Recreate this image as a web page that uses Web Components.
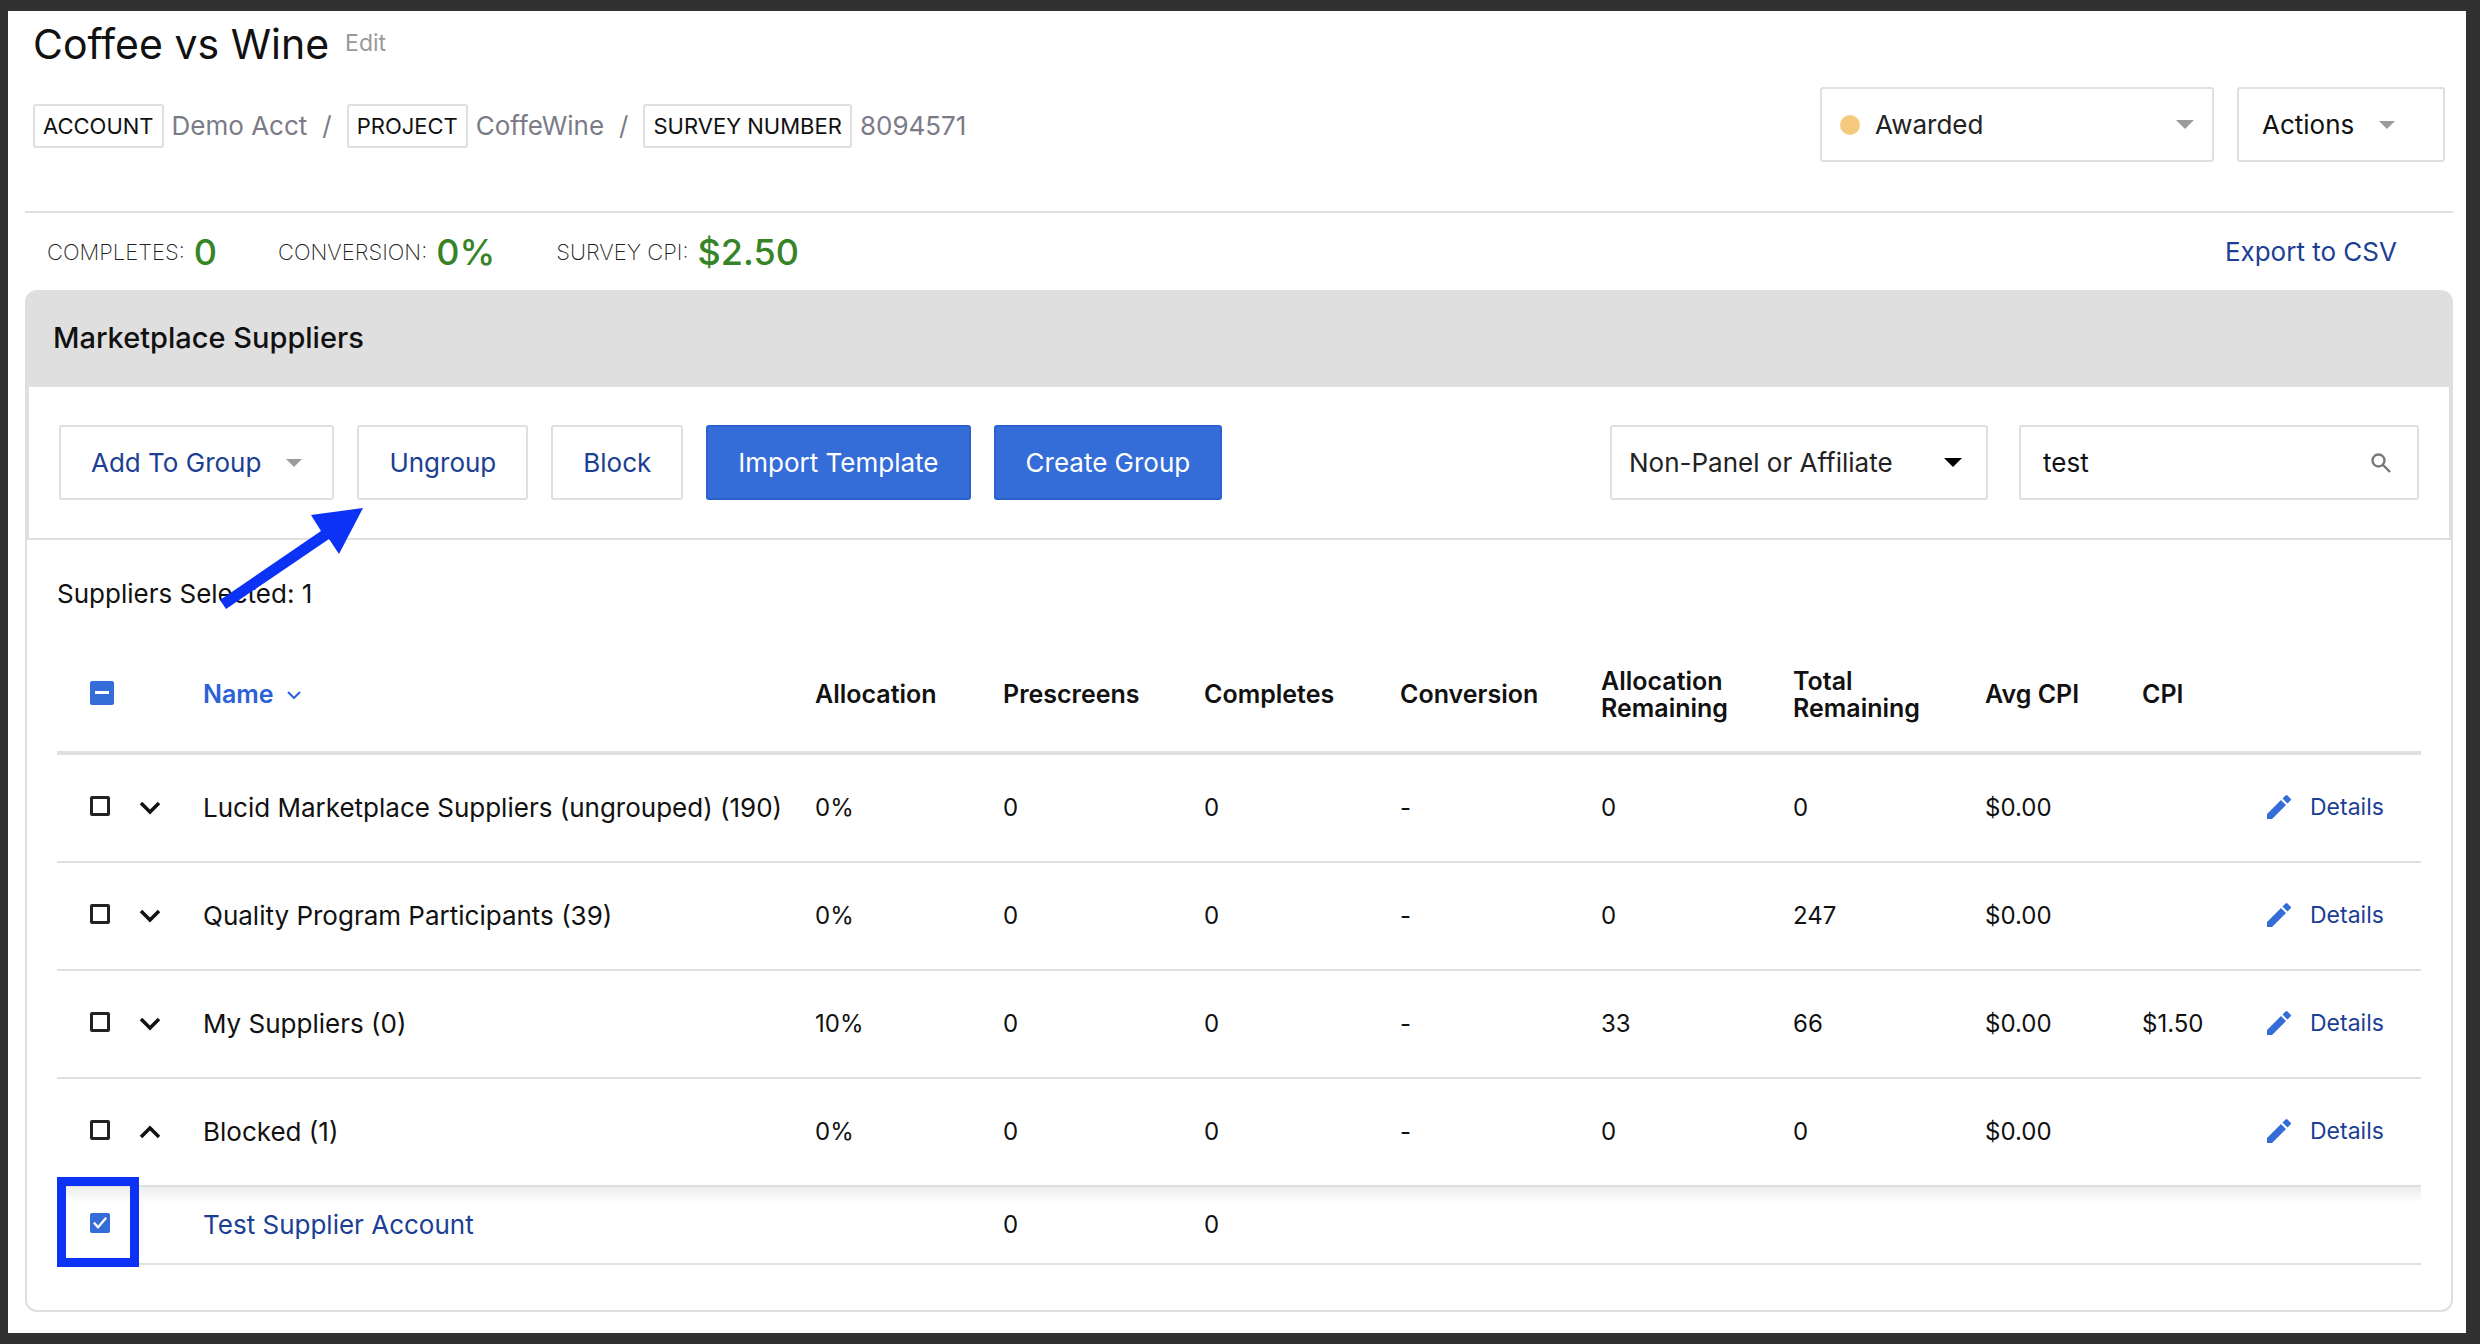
<!DOCTYPE html>
<html lang="en">
<head>
<meta charset="utf-8">
<title>Coffee vs Wine</title>
<style>
  * {
    box-sizing: border-box;
  }

  body {
    --line: #dfdfdf;
    --blue: #356dd8;
    --navy: #1b3f94;
    --grey: #9b9b9b;
    min-height: 100vh;
    margin: 0;
    padding: 11px 14px 11px 8px;
    background: #313131;
    color: #111111;
    font-family: Inter, "Liberation Sans", sans-serif;
    font-size: 26px;
    line-height: 32px;
  }

  main {
    padding: 0 13px 21px 17px;
    background: #ffffff;
  }
</style>
</head>
<body>
<main>
  <survey-header heading="Coffee vs Wine">
    <crumb-item slot="crumbs" label="ACCOUNT">Demo Acct</crumb-item>
    <crumb-item slot="crumbs" label="PROJECT">CoffeWine</crumb-item>
    <crumb-item slot="crumbs" label="SURVEY NUMBER">8094571</crumb-item>
    <my-select slot="actions" class="status" label="Survey status" option="Awarded" dot></my-select>
    <my-button slot="actions" class="actions" caret dark>Actions</my-button>
  </survey-header>

  <stats-bar>
    <stat-item label="COMPLETES:">0</stat-item>
    <stat-item label="CONVERSION:">0%</stat-item>
    <stat-item label="SURVEY CPI:">$2.50</stat-item>
  </stats-bar>

  <suppliers-panel heading="Marketplace Suppliers">
    <my-button slot="buttons" caret>Add To Group</my-button>
    <my-button slot="buttons">Ungroup</my-button>
    <my-button slot="buttons">Block</my-button>
    <my-button slot="buttons" primary>Import Template</my-button>
    <my-button slot="buttons" primary>Create Group</my-button>
    <my-select slot="filters" class="filter" label="Supplier type" option="Non-Panel or Affiliate"></my-select>
    <search-box slot="filters" value="test"></search-box>
    <supplier-table></supplier-table>
  </suppliers-panel>
</main>

<script>
(function () {
  function define(name, html, setup) {
    const template = document.createElement('template');
    template.innerHTML = html;

    window.customElements.define(name, class extends HTMLElement {
      constructor() {
        super();
        this._shadowRoot = this.attachShadow({ mode: 'open' });
        this._shadowRoot.appendChild(template.content.cloneNode(true));
      }
      connectedCallback() {
        if (setup) setup(this, this._shadowRoot);
      }
    });
  }

  define('survey-header', `
  <style>
    :host {
      display: flex;
      justify-content: space-between;
      align-items: flex-end;
      padding: 5px 8px 49px;
      border-bottom: 2px solid var(--line);
    }

    .title {
      display: flex;
      align-items: center;
      gap: 16px;
      margin-bottom: 32px;
    }

    h1 {
      margin: 0;
      font-size: 41px;
      font-weight: 400;
      line-height: 56px;
    }

    a {
      padding-bottom: 2px;
      color: #999999;
      font-size: 23px;
      text-decoration: none;
    }

    .crumbs, .controls {
      display: flex;
    }

    .crumbs {
      margin-bottom: 14px;
    }

    .controls {
      gap: 23px;
    }

    ::slotted(.status) {
      width: 394px;
    }

    ::slotted(.actions) {
      width: 208px;
    }
  </style>

  <div>
    <div class="title"><h1></h1><a href="#edit">Edit</a></div>
    <nav class="crumbs" aria-label="Survey"><slot name="crumbs"></slot></nav>
  </div>
  <div class="controls"><slot name="actions"></slot></div>
  `, (host, root) => {
    root.querySelector('h1').textContent = host.getAttribute('heading');
  });

  define('crumb-item', `
  <style>
    :host {
      display: flex;
      align-items: center;
      color: #7b7b87;
    }

    .tag {
      margin-right: 8px;
      padding: 4px 8px;
      border: 2px solid var(--line);
      border-radius: 3px;
      color: #111111;
      font-size: 22px;
    }

    .slash {
      margin: 0 15px;
    }

    :host(:last-of-type) .slash {
      display: none;
    }
  </style>

  <span class="tag"></span>
  <slot></slot>
  <span class="slash">/</span>
  `, (host, root) => {
    root.querySelector('.tag').textContent = host.getAttribute('label');
  });

  define('my-button', `
  <style>
    :host {
      display: block;
    }

    button {
      display: flex;
      align-items: center;
      gap: 25px;
      width: 100%;
      height: 75px;
      padding: 0 30px;
      background: #ffffff;
      border: 2px solid var(--line);
      border-radius: 3px;
      color: var(--navy);
      font: inherit;
      white-space: nowrap;
      cursor: pointer;
    }

    :host([dark]) button {
      padding: 0 23px;
      color: #111111;
    }

    :host([primary]) button {
      background: var(--blue);
      border-color: #2c60cf;
      color: #ffffff;
    }

    svg {
      display: none;
      fill: var(--grey);
    }

    :host([caret]) svg {
      display: block;
    }
  </style>

  <button type="button">
    <slot></slot>
    <svg width="16" height="8" viewBox="0 0 16 8"><path d="M0 0h16L8 8z"/></svg>
  </button>
  `);

  define('my-select', `
  <style>
    :host {
      display: grid;
      align-items: center;
    }

    select, .dot, svg {
      grid-area: 1 / 1;
    }

    select {
      width: 100%;
      height: 75px;
      margin: 0;
      padding: 0 60px 0 17px;
      appearance: none;
      background: #ffffff;
      border: 2px solid var(--line);
      border-radius: 3px;
      color: #222222;
      font: inherit;
    }

    .dot {
      display: none;
      width: 20px;
      height: 20px;
      margin-left: 20px;
      border-radius: 50%;
      background: #f5ca7f;
    }

    svg {
      justify-self: end;
      margin-right: 26px;
      pointer-events: none;
    }

    :host([dot]) .dot {
      display: block;
    }

    :host([dot]) select {
      padding-left: 53px;
    }

    :host([dot]) svg {
      margin-right: 20px;
      fill: var(--grey);
    }
  </style>

  <select></select>
  <span class="dot"></span>
  <svg width="18" height="9" viewBox="0 0 18 9"><path d="M0 0h18L9 9z"/></svg>
  `, (host, root) => {
    const $select = root.querySelector('select');
    $select.setAttribute('aria-label', host.getAttribute('label'));
    $select.innerHTML = '<option></option>';
    $select.firstChild.textContent = host.getAttribute('option');
  });

  define('search-box', `
  <style>
    :host {
      display: grid;
      align-items: center;
      width: 400px;
    }

    input, svg {
      grid-area: 1 / 1;
    }

    input {
      box-sizing: border-box;
      width: 100%;
      height: 75px;
      padding: 0 60px 0 22px;
      border: 2px solid var(--line);
      border-radius: 3px;
      color: #111111;
      font: inherit;
    }

    svg {
      justify-self: end;
      margin-right: 28px;
      fill: none;
      stroke: #777777;
      stroke-width: 2.4;
    }
  </style>

  <input type="text" aria-label="Search suppliers">
  <svg width="20" height="20" viewBox="0 0 20 20"><circle cx="7.5" cy="7.5" r="6"/><path d="M12 12l7 7"/></svg>
  `, (host, root) => {
    root.querySelector('input').value = host.getAttribute('value');
  });

  define('stats-bar', `
  <style>
    :host {
      display: flex;
      align-items: center;
      gap: 61px;
      height: 77px;
      padding: 0 56px 0 22px;
    }

    a {
      margin-left: auto;
      color: var(--navy);
      text-decoration: none;
    }
  </style>

  <slot></slot>
  <a href="#export">Export to CSV</a>
  `);

  define('stat-item', `
  <style>
    :host {
      display: flex;
      align-items: center;
      gap: 9px;
      color: #378428;
      font-size: 36px;
      font-weight: 500;
    }

    .label {
      color: #222222;
      font-size: 22px;
      font-weight: 200;
    }
  </style>

  <span class="label"></span>
  <slot></slot>
  `, (host, root) => {
    root.querySelector('.label').textContent = host.getAttribute('label');
  });

  define('suppliers-panel', `
  <style>
    :host {
      display: block;
      position: relative;
      border: 2px solid var(--line);
      border-radius: 12px;
    }

    h2 {
      margin: 0;
      padding: 30px 26px 33px;
      background: var(--line);
      border-radius: 9px 9px 0 0;
      font-size: 29px;
      font-weight: 500;
    }

    .toolbar {
      display: flex;
      justify-content: space-between;
      padding: 38px 30px;
      border: 2px solid var(--line);
      border-top: 0;
    }

    .buttons {
      display: flex;
      gap: 23px;
    }

    .filters {
      display: flex;
      gap: 31px;
    }

    ::slotted(.filter) {
      width: 378px;
    }

    .body {
      padding: 38px 30px 45px;
    }

    /* callout drawn over the panel */
    .arrow {
      position: absolute;
      top: 214px;
      left: 190px;
      fill: #0b32f5;
      pointer-events: none;
    }
  </style>

  <h2></h2>
  <div class="toolbar">
    <div class="buttons"><slot name="buttons"></slot></div>
    <div class="filters"><slot name="filters"></slot></div>
  </div>
  <div class="body"><slot></slot></div>
  <svg class="arrow" width="150" height="106" viewBox="0 0 150 106">
    <path d="M146 2L94 9l10 16L3 94l6 9 103-70 10 15z"/>
  </svg>
  `, (host, root) => {
    root.querySelector('h2').textContent = host.getAttribute('heading');
  });

  const suppliers = [
    { name: 'Lucid Marketplace Suppliers (ungrouped) (190)', cells: ['0%', '0', '0', '-', '0', '0', '$0.00', ''] },
    { name: 'Quality Program Participants (39)', cells: ['0%', '0', '0', '-', '0', '247', '$0.00', ''] },
    { name: 'My Suppliers (0)', cells: ['10%', '0', '0', '-', '33', '66', '$0.00', '$1.50'] },
    { name: 'Blocked (1)', open: true, cells: ['0%', '0', '0', '-', '0', '0', '$0.00', ''] },
    { name: 'Test Supplier Account', child: true, cells: ['', '0', '0', '', '', '', '', ''] }
  ];

  const pencil = '<svg class="pencil" width="24" height="24" viewBox="0 0 24 24"><path d="M0 24v-5L14 5l5 5L5 24zM15.5 3.5l3-3q1-1 2 0l3 3q1 1 0 2l-3 3z"/></svg>';

  function row(item) {
    const points = item.open ? 'M2 12l9-9 9 9' : 'M2 2l9 9 9-9';
    const toggle = `<button type="button" class="toggle" aria-label="Toggle ${item.name}" aria-expanded="${!!item.open}">
      <svg width="22" height="14" viewBox="0 0 22 14"><path d="${points}"/></svg></button>`;

    return `
    <tr class="${item.child ? 'child' : ''}">
      <td><div class="pick">
        <input type="checkbox" aria-label="Select ${item.name}" ${item.child ? 'checked' : ''}>
        ${item.child ? '<span class="highlight"></span>' : toggle}
      </div></td>
      <td class="name">${item.child ? `<a href="#supplier">${item.name}</a>` : item.name}</td>
      ${item.cells.map(cell => `<td>${cell}</td>`).join('')}
      <td>${item.child ? '' : `<a class="details" href="#details">${pencil}Details</a>`}</td>
    </tr>`;
  }

  define('supplier-table', `
  <style>
    :host {
      display: block;
    }

    p {
      margin: 0 0 28px;
    }

    table {
      width: 100%;
      table-layout: fixed;
      border-spacing: 0;
      font-size: 24px;
    }

    th, td {
      box-sizing: border-box;
      height: 108px;
      padding: 0;
      border-bottom: 2px solid var(--line);
      text-align: left;
      vertical-align: middle;
    }

    th {
      height: 117px;
      border-bottom-width: 4px;
      font-size: 25px;
      font-weight: 600;
      line-height: 27px;
    }

    .name {
      font-size: 26px;
      white-space: nowrap;
    }

    .child td {
      position: relative;
      height: 78px;
      background: linear-gradient(#ededed, #ffffff 16px);
    }

    a {
      color: var(--navy);
      text-decoration: none;
    }

    button {
      display: flex;
      align-items: center;
      padding: 0;
      background: none;
      border: 0;
      font: inherit;
      cursor: pointer;
    }

    svg {
      fill: none;
      stroke: #111111;
      stroke-width: 3.5;
    }

    .sort {
      gap: 13px;
      color: #2a62d8;
    }

    .sort svg {
      stroke: #2a62d8;
      stroke-width: 2;
    }

    .pick {
      display: flex;
      align-items: center;
      gap: 29px;
      padding-left: 33px;
    }

    .details {
      display: flex;
      align-items: center;
      gap: 19px;
      padding-bottom: 3px;
      font-size: 23px;
    }

    .pencil {
      fill: var(--blue);
      stroke: none;
    }

    input {
      display: grid;
      place-items: center;
      width: 20px;
      height: 20px;
      margin: 0 0 4px;
      appearance: none;
      border: 3px solid #222222;
      border-radius: 2px;
    }

    input:checked, input:indeterminate {
      background: var(--blue);
      border: 0;
    }

    input:indeterminate {
      width: 24px;
      height: 24px;
    }

    input:indeterminate::before {
      content: '';
      width: 14px;
      height: 3px;
      background: #ffffff;
    }

    input:checked::before {
      content: '';
      width: 14px;
      height: 12px;
      background: #ffffff;
      clip-path: polygon(0 55%, 12% 40%, 36% 70%, 88% 0, 100% 12%, 36% 100%);
    }

    .highlight {
      position: absolute;
      top: -10px;
      left: 0;
      box-sizing: border-box;
      width: 82px;
      height: 90px;
      border: 9px solid #0b32f5;
      pointer-events: none;
    }
  </style>

  <p>Suppliers Selected: 1</p>
  <table>
    <colgroup>
      <col style="width: 146px"><col>
      <col style="width: 188px"><col style="width: 201px">
      <col style="width: 196px"><col style="width: 201px">
      <col style="width: 192px"><col style="width: 192px">
      <col style="width: 157px"><col style="width: 125px">
      <col style="width: 154px">
    </colgroup>
    <thead>
      <tr>
        <th><div class="pick"><input type="checkbox" class="all" aria-label="Select all suppliers"></div></th>
        <th><button type="button" class="sort">Name
          <svg width="14" height="8" viewBox="0 0 14 8"><path d="M1 1l6 6 6-6"/></svg></button></th>
        <th>Allocation</th>
        <th>Prescreens</th>
        <th>Completes</th>
        <th>Conversion</th>
        <th>Allocation<br>Remaining</th>
        <th>Total<br>Remaining</th>
        <th>Avg CPI</th>
        <th>CPI</th>
        <th></th>
      </tr>
    </thead>
    <tbody></tbody>
  </table>
  `, (host, root) => {
    root.querySelector('tbody').innerHTML = suppliers.map(row).join('');
    root.querySelector('.all').indeterminate = true;
  });
})()
</script>
</body>
</html>
